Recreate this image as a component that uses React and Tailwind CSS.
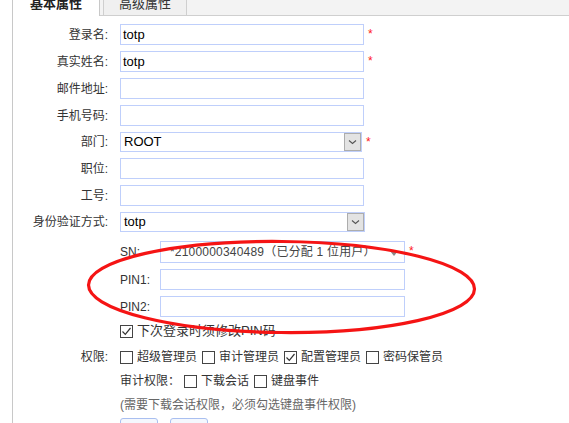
// User edit form: basic attributes tab, with the SN / PIN block circled in red
function Label({ children }) {
  return (
    <div className="w-[95px] shrink-0 text-right text-[12px] text-[#333]">{children}</div>
  );
}

function Star() {
  return <span className="ml-[4px] mt-[3px] self-start text-[12px] leading-[14px] text-[#ff1a1a]">*</span>;
}

function TextRow({ label, value, star }) {
  return (
    <div className="flex items-center h-[21px]">
      <Label>{label}</Label>
      <div className="ml-[12px] w-[244px] h-[21px] border border-[#bfcffb] bg-white px-[2px] text-[13px] leading-[19px] text-black">
        {value}
      </div>
      {star && <Star />}
    </div>
  );
}

function Chevron() {
  return (
    <svg width="9" height="6" viewBox="0 0 9 6">
      <path d="M1 1.5 L4.5 4.5 L8 1.5" fill="none" stroke="#555" strokeWidth="1.1" />
    </svg>
  );
}

function SelectRow({ label, value, wide, star }) {
  return (
    <div className="flex items-center h-[20px]">
      <Label>{label}</Label>
      <div className={"ml-[12px] h-[20px] flex border border-[#bfcffb] bg-white " + (wide ? "w-[245px]" : "w-[242px]")}>
        <div className="flex-1 px-[3px] text-[13px] leading-[18px] text-black">{value}</div>
        <div className="w-[17px] h-full bg-[#e3e3e3] border border-[#adadad] flex items-center justify-center">
          <Chevron />
        </div>
      </div>
      {star && <Star />}
    </div>
  );
}

function Check({ checked }) {
  return (
    <span className="inline-flex w-[13px] h-[13px] shrink-0 border border-[#444] bg-white items-center justify-center">
      {checked && (
        <svg width="11" height="11" viewBox="0 0 11 11">
          <path d="M1.5 5.5 L4.3 8.3 L9.5 2" fill="none" stroke="#333" strokeWidth="1.2" />
        </svg>
      )}
    </span>
  );
}

function CheckItem({ checked, children }) {
  return (
    <span className="inline-flex items-center mr-[5px]">
      <Check checked={checked} />
      <span className="ml-[4px]">{children}</span>
    </span>
  );
}

export default function App() {
  return (
    <div className="relative w-[569px] h-[423px] overflow-hidden bg-white font-['Liberation_Sans','Noto_Sans_CJK_SC',sans-serif]">
      <div className="ml-[12px] h-full border-l border-[#c8c8c8]">
        {/* tab strip */}
        <div className="flex h-[16px] overflow-hidden">
          <div className="w-[87px] h-full bg-white border-r border-[#c8c8c8] text-center">
            <div className="-mt-[5px] text-[13px] leading-[18px] font-bold text-[#222]">基本属性</div>
          </div>
          <div className="w-[3px] h-full bg-[#f3f3f3] border-b border-[#cfcfcf]" />
          <div className="w-[84px] h-full bg-[#f0f0f0] border-x border-b border-[#cfcfcf] text-center">
            <div className="-mt-[5px] text-[13px] leading-[18px] text-[#333]">高级属性</div>
          </div>
          <div className="flex-1 h-full bg-[#f3f3f3] border-b border-[#cfcfcf]" />
        </div>

        {/* basic fields */}
        <div className="pt-[8px] flex flex-col gap-[6px]">
          <TextRow label="登录名:" value="totp" star />
          <TextRow label="真实姓名:" value="totp" star />
          <TextRow label="邮件地址:" />
          <TextRow label="手机号码:" />
          <SelectRow label="部门:" value="ROOT" star />
          <TextRow label="职位:" />
          <TextRow label="工号:" />
          <SelectRow label="身份验证方式:" value="totp" wide />
        </div>

        {/* token block */}
        <div className="pl-[107px] mt-[9px] flex flex-col gap-[6px] text-[12px] text-[#333]">
          <div className="flex items-center h-[22px]">
            <div className="w-[40px]">SN:</div>
            <div className="w-[245px] h-[22px] flex items-center border border-[#bfcffb] bg-white pl-[9px] pr-[6px]">
              <span className="flex-1 text-[12px] tracking-[0.2px] text-[#444] whitespace-nowrap">*2100000340489（已分配 1 位用户）</span>
              <svg width="8" height="5" viewBox="0 0 8 5" className="mt-[3px]">
                <path d="M0 0 L8 0 L4 5 Z" fill="#8a8a8a" />
              </svg>
            </div>
            <Star />
          </div>
          <div className="flex items-center h-[21px]">
            <div className="w-[40px]">PIN1:</div>
            <div className="w-[245px] h-[21px] border border-[#bfcffb] bg-white" />
          </div>
          <div className="flex items-center h-[21px]">
            <div className="w-[40px]">PIN2:</div>
            <div className="w-[245px] h-[21px] border border-[#bfcffb] bg-white" />
          </div>
          <div className="flex items-center h-[16px] text-[13px]">
            <CheckItem checked>下次登录时须修改PIN码</CheckItem>
          </div>
        </div>

        {/* permissions */}
        <div className="mt-[10px] flex items-center h-[16px] text-[12px] text-[#333]">
          <Label>权限:</Label>
          <div className="ml-[12px] flex items-center whitespace-nowrap">
            <CheckItem>超级管理员</CheckItem>
            <CheckItem>审计管理员</CheckItem>
            <CheckItem checked>配置管理员</CheckItem>
            <CheckItem>密码保管员</CheckItem>
          </div>
        </div>
        <div className="mt-[8px] pl-[107px] flex items-center h-[16px] text-[12px] text-[#333] whitespace-nowrap">
          <span className="mr-[4px]">审计权限：</span>
          <CheckItem>下载会话</CheckItem>
          <CheckItem>键盘事件</CheckItem>
        </div>
        <div className="mt-[8px] pl-[107px] h-[16px] text-[12px] leading-[16px] text-[#666] whitespace-nowrap">
          (需要下载会话权限，必须勾选键盘事件权限)
        </div>
        <div className="mt-[5px] pl-[107px] flex gap-[12px]">
          <div className="w-[38px] h-[22px] rounded-[3px] border border-[#a9bff0] bg-[#f4f7fd]" />
          <div className="w-[38px] h-[22px] rounded-[3px] border border-[#a9bff0] bg-[#f4f7fd]" />
        </div>
      </div>

      {/* red annotation ellipse */}
      <svg className="absolute left-0 top-0 pointer-events-none" width="569" height="423">
        <ellipse
          cx="281.5"
          cy="287"
          rx="193"
          ry="45.5"
          fill="none"
          stroke="#f51414"
          strokeWidth="3.2"
          transform="rotate(0.6 281.5 287)"
        />
      </svg>
    </div>
  );
}
